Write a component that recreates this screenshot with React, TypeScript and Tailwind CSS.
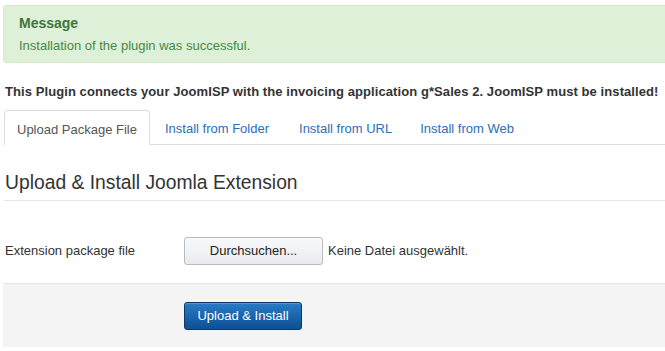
import React from "react";

export default function App() {
  return (
    <div
      className="w-[665px] h-[351px] overflow-hidden bg-white text-[13px] text-[#333]"
      style={{ fontFamily: '"Liberation Sans", Arial, sans-serif' }}
    >
      <div className="pl-[3px] pt-[5px]">
        <div className="h-[58px] rounded-l-[4px] border border-r-0 border-[#d6e9c6] bg-[#dff0d8] pl-[15px] pt-[7px] text-[#3c763d]">
          <div className="text-[14px] font-bold leading-[20px]">Message</div>
          <div className="mt-[4px] leading-[18px] text-[#468847]">Installation of the plugin was successful.</div>
        </div>
      </div>

      <div className="mt-[21px] pl-[5px] font-bold leading-[16px] tracking-[0.08px] whitespace-nowrap">
        This Plugin connects your JoomISP with the invoicing application g*Sales 2. JoomISP must be installed!
      </div>

      <div className="mt-[10px] ml-[4px] flex h-[35px] items-end border-b border-[#ddd]">
        <div className="-mb-px flex h-[35px] items-center rounded-t-[4px] border border-b-0 border-[#ddd] bg-white px-[12px] pt-[4px] text-[#555]">
          Upload Package File
        </div>
        <div className="flex h-[34px] items-center pl-[15px] pr-[16px] pt-[4px] text-[#2a6fb6]">Install from Folder</div>
        <div className="flex h-[34px] items-center px-[14px] pt-[4px] text-[#2a6fb6]">Install from URL</div>
        <div className="flex h-[34px] items-center px-[14px] pt-[4px] text-[#2a6fb6]">Install from Web</div>
      </div>

      <div className="ml-[4px] mt-[26px] border-b border-[#e5e5e5] pb-[5px] pl-[1px] text-[19.3px] leading-[24px]">
        Upload &amp; Install Joomla Extension
      </div>

      <div className="mt-[36px] flex h-[28px] items-center pl-[5px]">
        <div className="w-[179px]">Extension package file</div>
        <div className="flex h-[28px] w-[139px] items-center justify-center rounded-[3px] border border-[#bbb] bg-gradient-to-b from-[#f7f9fa] to-[#e9ecef] text-[#222]">
          Durchsuchen...
        </div>
        <div className="ml-[5px]">Keine Datei ausgewählt.</div>
      </div>

      <div className="ml-[3px] mt-[18px] h-[64px] border-t border-[#e5e5e5] bg-[#f3f4f3] pl-[181px] pt-[18px]">
        <div className="flex h-[28px] w-[118px] items-center justify-center rounded-[3px] border border-[#0c3768] bg-gradient-to-b from-[#2a7bc6] to-[#0d4f94] text-white shadow-[inset_0_1px_0_rgba(255,255,255,0.2)]">
          Upload &amp; Install
        </div>
      </div>
    </div>
  );
}
